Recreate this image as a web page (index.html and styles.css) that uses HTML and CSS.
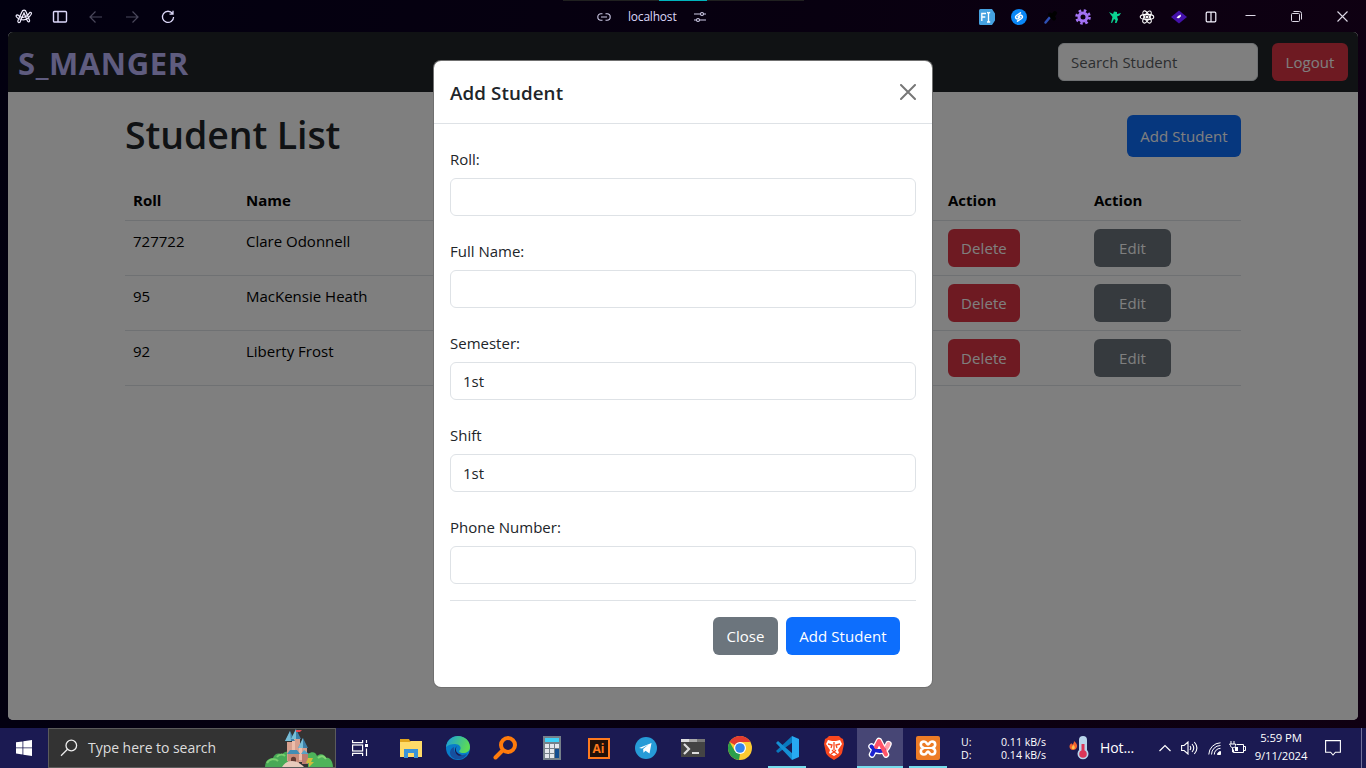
FILE: index.html
```html
<!DOCTYPE html>
<html lang="en">
<head>
<meta charset="utf-8">
<title>Student List</title>
<link rel="stylesheet" href="styles.css">
</head>
<body>
<div class="desktop">
  <header class="titlebar">
    <div class="nav-icons">
      <svg width="18" height="16" viewBox="0 0 18 16" fill="none" stroke="#f1edff" stroke-width="1.2"><path d="M6 10.5 9 4l3.2 7.5c1 2.300 2.800 1.400 2.300-.2L11.200 3C10.500.4 7.700.4 6.800 3L3 11.500c-.8 2 1.500 3 2.200 1.200l.8-2.200c3.500 1 7.500-.7 10.200-5.200 1-1.800-.9-2.800-1.800-1.300C11.500 9 6.500 9.500 3.500 6.500 2.300 5.200.3 6.300 1.500 8c1 1.500 2.700 2.200 4.500 2.500"/></svg>
      <svg width="16" height="14" viewBox="0 0 16 14" fill="none" stroke="#ddd8fa" stroke-width="1.400"><rect x="1.500" y="1.500" width="13" height="10.500" rx="1"/><path d="M6 1.500V12"/></svg>
      <svg width="14" height="14" viewBox="0 0 14 14" fill="none" stroke="#4b485c" stroke-width="1.200"><path d="M13 7H1M6.500 1.500 1 7l5.500 5.500"/></svg>
      <svg width="14" height="14" viewBox="0 0 14 14" fill="none" stroke="#4b485c" stroke-width="1.200"><path d="M1 7h12M7.500 1.500 13 7l-5.500 5.500"/></svg>
      <svg width="14" height="14" viewBox="0 0 14 14" fill="none" stroke="#ddd8fa" stroke-width="1.300"><path d="M11.500 3.500A5.600 5.600 0 1 0 12.600 7M12 .8v3.400H8.500"/></svg>
    </div>
    <div class="address">
      <svg width="14" height="10" viewBox="0 0 14 10" fill="none" stroke="#cfcbe8" stroke-width="1.100"><path d="M5.500 1.800H4a3.200 3.200 0 0 0 0 6.400h1.500M8.500 1.800H10a3.200 3.200 0 0 1 0 6.400H8.500M4 5h6"/></svg>
      <span class="host">localhost</span>
      <svg width="14" height="12" viewBox="0 0 14 12" fill="none" stroke="#cfcbe8" stroke-width="1.100"><path d="M1 3h6.500M10.500 3H13M1 9h2.500M6.500 9H13"/><circle cx="9" cy="3" r="1.500"/><circle cx="5" cy="9" r="1.500"/></svg>
    </div>
    <div class="progress"><span class="progress-mark"></span></div>
    <div class="extensions">
      <svg width="16" height="16" viewBox="0 0 16 16"><path d="M1.500 0H13l3 4.500v7L13 16H1.500A1.500 1.500 0 0 1 0 14.500v-13A1.500 1.500 0 0 1 1.500 0Z" fill="#45a1e0"/><path d="M2.800 12V4.500H7M2.800 8h3.500M8 3.500c1 0 1.500.3 1.500 1 0-.7.700-1 1.700-1M9.500 4.500v7.500M8 13c1 0 1.500-.3 1.500-1 0 .7.700 1 1.700 1" fill="none" stroke="#fff" stroke-width="1.300"/></svg>
      <svg width="16" height="16" viewBox="0 0 16 16"><circle cx="8" cy="8" r="8" fill="#0a87f7"/><path d="M9.500 3.800 5.500 6.500C3.500 8 5.300 10.800 7.200 9.600L9 8.200M6.500 12.200l4-2.700C12.500 8 10.700 5.200 8.800 6.400L7 7.800" fill="none" stroke="#fff" stroke-width="1.500" stroke-linecap="round"/></svg>
      <svg width="16" height="16" viewBox="0 0 16 16"><path d="m2.500 13.500 5-6" stroke="#2e50b5" stroke-width="2.500" stroke-linecap="round"/><path d="m7 5.500 4 4M9 8l3-4" stroke="#000" stroke-width="4" stroke-linecap="round"/></svg>
      <svg width="16" height="16" viewBox="0 0 16 16" fill="none" stroke="#a372f4"><circle cx="8" cy="8" r="6.500" stroke-width="2.600" stroke-dasharray="2.550 2.550"/><circle cx="8" cy="8" r="4" stroke-width="3"/></svg>
      <svg width="16" height="16" viewBox="0 0 16 16"><path d="m2 3 4 2 1-2.500 3 .5v2l4-1-1.500 2.500L10 7.500l1 3L9.500 14 8 14l.5-3L7 10l-2 4-1-.2L5.500 8 4 6Z" fill="#0bd392"/></svg>
      <svg width="16" height="16" viewBox="0 0 16 16" fill="none" stroke="#fff" stroke-width="1.100"><ellipse cx="8" cy="8" rx="6.800" ry="2.600"/><ellipse cx="8" cy="8" rx="6.800" ry="2.600" transform="rotate(60 8 8)"/><ellipse cx="8" cy="8" rx="6.800" ry="2.600" transform="rotate(120 8 8)"/><circle cx="8" cy="8" r="1" fill="#fff"/></svg>
      <svg width="16" height="16" viewBox="0 0 16 16"><path d="m8 1.500 8 6.500-8 6.500L0 8Z" fill="#4411aa"/><path d="m5.500 9 1.500-2 3-1.500-.3 2L8 9.200Z" fill="#fff"/></svg>
      <svg width="16" height="16" viewBox="0 0 16 16" fill="none" stroke="#f5f3ff" stroke-width="1.200"><rect x="3.200" y="3.200" width="9.600" height="9.600" rx="1"/><path d="M8 3v10"/></svg>
    </div>
    <div class="window-controls">
      <svg width="11" height="11" viewBox="0 0 11 11" stroke="#ddd8e6"><path d="M0.500 4.500h10"/></svg>
      <svg width="11" height="11" viewBox="0 0 11 11" fill="none" stroke="#ddd8e6"><rect x=".5" y="2.500" width="8" height="8" rx="1"/><path d="M2.500.5h6a2 2 0 0 1 2 2v6"/></svg>
      <svg width="11" height="11" viewBox="0 0 11 11" stroke="#ddd8e6" stroke-width="1.100"><path d="m.5.5 10 10m0-10-10 10"/></svg>
    </div>
  </header>

  <main class="page">
    <nav class="navbar">
      <span class="brand">S_MANGER</span>
      <div class="search-box">Search Student</div>
      <button class="btn danger">Logout</button>
    </nav>
    <section class="content">
      <div class="list-head">
        <h1 class="list-title">Student List</h1>
        <button class="btn primary tall">Add Student</button>
      </div>
      <table class="students">
        <colgroup><col class="col-roll"><col class="col-name"><col class="col-action"><col class="col-edit"></colgroup>
        <thead><tr><th>Roll</th><th>Name</th><th>Action</th><th>Action</th></tr></thead>
        <tbody>
          <tr><td>727722</td><td>Clare Odonnell</td><td><button class="btn danger">Delete</button></td><td><button class="btn secondary edit">Edit</button></td></tr>
          <tr><td>95</td><td>MacKensie Heath</td><td><button class="btn danger">Delete</button></td><td><button class="btn secondary edit">Edit</button></td></tr>
          <tr><td>92</td><td>Liberty Frost</td><td><button class="btn danger">Delete</button></td><td><button class="btn secondary edit">Edit</button></td></tr>
        </tbody>
      </table>
    </section>
    <div class="backdrop">
      <div class="modal">
        <div class="modal-head">
          <h5 class="modal-title">Add Student</h5>
          <svg width="16" height="16" viewBox="0 0 16 16" stroke="#777" stroke-width="2" stroke-linecap="round"><path d="m1 1 14 14M15 1 1 15"/></svg>
        </div>
        <div class="modal-body">
          <div class="field"><label class="field-label">Roll:</label><div class="control"></div></div>
          <div class="field"><label class="field-label">Full Name:</label><div class="control"></div></div>
          <div class="field"><label class="field-label">Semester:</label><div class="control">1st</div></div>
          <div class="field"><label class="field-label">Shift</label><div class="control">1st</div></div>
          <div class="field last"><label class="field-label">Phone Number:</label><div class="control"></div></div>
          <div class="modal-foot">
            <button class="btn secondary close">Close</button>
            <button class="btn primary">Add Student</button>
          </div>
        </div>
      </div>
    </div>
  </main>

  <footer class="taskbar">
    <div class="start"><svg width="16" height="16" viewBox="0 0 16 16" fill="#fff"><path d="M0 2.300 6.500 1.400v6.100H0ZM7.300 1.300 16 0v7.500H7.300ZM0 8.300h6.500v6.200L0 13.600ZM7.300 8.300H16V16l-8.700-1.300Z"/></svg></div>
    <div class="task-search">
      <svg width="18" height="18" viewBox="0 0 18 18" fill="none" stroke="#eee" stroke-width="1.300"><circle cx="11.300" cy="6.500" r="5.300"/><path d="M7.500 10.300 1 16.800"/></svg>
      <span class="task-search-text">Type here to search</span>
      <svg class="castle" width="70" height="38" viewBox="0 0 70 38">
        <path d="M0 38c0-5 3-9 8-9 1-4 6-6 9-3 3-5 9-4 11 0l2 12Z" fill="#48a957"/><path d="M2 34c2-4 8-5 11-2M12 28c2-3 6-3 8-1" fill="none" stroke="#7bcf70" stroke-width="2"/>
        <path d="M43 38V25c4-3 8-2 9 2 3-3 8-2 9 2 4-1 7 4 7 9Z" fill="#4db45a"/><path d="M53 29c3-3 6-2 8 1" fill="none" stroke="#83d575" stroke-width="2"/>
        <path d="M22 13h6v19h-6ZM27 8h8v24h-8ZM34 17h8v16h-8Z" fill="#d7a08f"/><path d="M27 8h3v24h-3ZM34 17h3v14h-3Z" fill="#edbdaa"/>
        <path d="m25 2 5 10H20ZM31 0l5 10H26ZM38 9l5 10H33Z" fill="#3d7fa8"/><path d="m25 2 1 10h-6ZM31 0v10h-5ZM38 9v10h-5Z" fill="#78bdd6"/>
        <path d="M31 1h6l-2 2h-4Z" fill="#e44850"/><path d="M23 24h11v12H23Z" fill="#c88b78"/><path d="m22 25 3-4h7l3 4Z" fill="#438db4"/><path d="M26 36v-6c0-3 5-3 5 0v6Z" fill="#643a32"/>
        <path d="M37 25h6v10h-6Z" fill="#bb7c70"/><path d="m36 25 3-4 5 4Z" fill="#57a2c4"/><path d="M17 38c3-4 5-6 10-6s9 3 12 6Z" fill="#e8cbbc"/><path d="M43 29h5l-2 4h3l-5 5v-4h-3Z" fill="#d1bd3d"/>
      </svg>
    </div>
    <div class="tasks">
      <div class="task view"><svg width="16" height="16" viewBox="0 0 16 16" fill="none" stroke="#fff" stroke-width="1.200"><path d="M.6 0v2.600h10V0M.6 16v-2.600h10V16M14.500 0v3M14.500 8.500V16"/><rect x=".6" y="5" width="10" height="6"/><path d="M13 4h3v3h-3Z" fill="#fff" stroke="none"/></svg></div>
      <div class="task"><svg width="24" height="24" viewBox="0 0 24 24"><path d="M1 3h9l1 2h12v16H1Z" fill="#e1a51d"/><path d="M1 6h10l1-1h11v16H1Z" fill="#ffdb68"/><path d="M5 22v-9h14v9h-4v-5H9v5Z" fill="#3993d8"/></svg></div>
      <div class="task"><svg width="24" height="24" viewBox="0 0 24 24"><defs><linearGradient id="edge-top" x2="1" y2=".3"><stop stop-color="#199be2"/><stop offset="1" stop-color="#5bdb57"/></linearGradient></defs><circle cx="12" cy="12" r="12" fill="#087cc9"/><path d="M0 11C1 4 6 0 12 0c7 0 12 5 12 11 0 4-3 6-7 6-3 0-5-1-3-3 2-3-1-6-5-6-4 0-7 1-9 3Z" fill="url(#edge-top)"/><path d="M8 11c-1 7 5 10 13 7-3 5-8 6-12 5C2 20 3 13 8 11Z" fill="#164f9e"/><path d="M11 10c-3 4 0 8 5 9-5 3-10-5-5-9Z" fill="#1b1a52"/></svg></div>
      <div class="task"><svg width="24" height="24" viewBox="0 0 24 24" fill="none" stroke="#ff7b0b"><circle cx="15" cy="9" r="7" stroke-width="4"/><path d="m9.500 14.500-7 7" stroke-width="4" stroke-linecap="round"/></svg></div>
      <div class="task"><svg width="18" height="24" viewBox="0 0 18 24"><path d="M0 0h18v24H0Z" fill="#75808a"/><path d="M2 2h14v4H2Z" fill="#3ed0f7"/><path d="M2 8h4v4H2Zm5 0h4v4H7Zm5 0h4v4h-4ZM2 13h4v4H2Zm5 0h4v4H7ZM2 18h4v4H2Zm5 0h4v4H7Z" fill="#e4e7ed"/><path d="M12 13h4v9h-4Z" fill="#124d90"/></svg></div>
      <div class="task"><div class="ai-icon">Ai</div></div>
      <div class="task"><svg width="22" height="22" viewBox="0 0 22 22"><circle cx="11" cy="11" r="11" fill="#269bd7"/><path d="m4 11 12.500-5-2 10.500-4-2.800-2 2-.4-3.700 5.400-4.500-6.500 4Z" fill="#fff"/></svg></div>
      <div class="task"><svg width="24" height="18" viewBox="0 0 24 18"><path d="M0 0h24v18H0Z" fill="#444"/><path d="M0 0h8v3H0Z" fill="#ddd"/><path d="M8 0h8v3H8Z" fill="#aaa"/><path d="M16 0h8v3h-8Z" fill="#777"/><path d="m3 5 5 5-5 5M11 14h7" fill="none" stroke="#ddd" stroke-width="2.200"/></svg></div>
      <div class="task"><svg width="24" height="24" viewBox="0 0 24 24"><circle cx="12" cy="12" r="12" fill="#fccb32"/><path d="M1.600 6A12 12 0 0 1 22.400 6H12v6Z" fill="#e33b2f"/><path d="M1.600 6 6.800 15 12 18l-1 6A12 12 0 0 1 1.600 6Z" fill="#2b9f4a"/><circle cx="12" cy="12" r="6" fill="#fff"/><circle cx="12" cy="12" r="4.800" fill="#3484ed"/></svg></div>
      <div class="task running"><svg width="24" height="24" viewBox="0 0 24 24"><path d="M17 0 1 15l2 2L18 6Z" fill="#0879be"/><path d="M1 7 3 5l15 13-1 6Z" fill="#1590d4"/><path d="m17 0 7 3v18l-7 3Z" fill="#27a9f2"/></svg></div>
      <div class="task"><svg width="20" height="24" viewBox="0 0 20 24"><path d="M5 0h10l2 2 2 1 1 5-2 9c-1 3-5 5-8 7-3-2-7-4-8-7L0 8l1-5 2-1Z" fill="#f9471e"/><path d="m4 4 4 1h4l4-1 2 4-4 6 1 3-5 3-5-3 1-3-4-6Z" fill="#fff"/><path d="m4 8 4 1-1 3M16 8l-4 1 1 3M10 6v8m-2 0 2 2 2-2M7 18l3-2 3 2" fill="none" stroke="#f9471e" stroke-width="1.300"/></svg></div>
      <div class="task active"><svg width="24" height="22" viewBox="0 0 24 22" fill="none" stroke-linecap="round" stroke-linejoin="round"><path d="M4 17.500 11 4l7 13.500M3.500 9.500c4 6 14 7 17-2.500" stroke="#fff" stroke-width="6.500"/><path d="M20.500 7c-1 3-2.500 5-5 6.500" stroke="#ff9da9" stroke-width="4"/><path d="M3.500 9.500c3 4.500 8 5.500 12.500 3.500M4 17.500l2.500-5" stroke="#1a20cf" stroke-width="4"/><path d="m8 10 3-6 7 13.500" stroke="#ff5368" stroke-width="4"/></svg></div>
      <div class="task running"><svg width="24" height="24" viewBox="0 0 24 24"><rect width="24" height="24" rx="2" fill="#ed7c26"/><path d="M8 12C3.500 11 4 5.500 8 5.500c3 0 2.500 3 4 3s1-3 4-3c4 0 4.500 5.500 0 6.500 4.500 1 4 6.500 0 6.500-3 0-2.500-3-4-3s-1 3-4 3c-4 0-4.500-5.500 0-6.500Z" fill="none" stroke="#fff" stroke-width="2.600"/><path d="M8 12h8" stroke="#fff" stroke-width="2"/></svg></div>
    </div>
    <div class="net"><span>U:</span><span class="rate">0.11 kB/s</span><span>D:</span><span class="rate">0.14 kB/s</span></div>
    <div class="weather">
      <svg width="20" height="24" viewBox="0 0 20 24"><path d="M5 5c2.500 2 3.500 4 3 6s-2 3-4 3-3.500-1.500-3.500-3.500S2 7.500 2.500 7c0 1 .5 1.500 1 1.500C4.500 7.500 5 6.500 5 5Z" fill="#f2632f"/><path d="M4.500 9c1.500 1.500 2 4-.3 4.200C2 13 2.500 10.500 4.500 9Z" fill="#ffc34d"/><path d="M10 4a4 4 0 0 1 8 0v10a5.500 5.500 0 1 1-8 0Z" fill="#b9d5ec"/><circle cx="14" cy="18" r="3.800" fill="#db3658"/><path d="M14 8v9" stroke="#db3658" stroke-width="3"/></svg>
      <span class="weather-text">Hot...</span>
    </div>
    <div class="tray">
      <svg width="12" height="8" viewBox="0 0 12 8" fill="none" stroke="#fff" stroke-width="1.200"><path d="m.5 7 5.500-5.500L11.500 7"/></svg>
      <svg width="17" height="14" viewBox="0 0 17 14" fill="none" stroke="#fff" stroke-width="1.100"><path d="M.6 4.500h2.500L7 1v12L3.100 9.500H.6ZM9 5c1 1.300 1 2.700 0 4M11 3c2.300 2.600 2.300 5.400 0 8M13.300 1c3.500 4 3.500 8 0 12"/></svg>
      <svg width="13" height="13" viewBox="0 0 13 13" fill="none" stroke="#fff"><path d="M.8 12.500A12 12 0 0 1 12.500.8M3.500 12.500a9 9 0 0 1 9-9M6.300 12.500a6.200 6.200 0 0 1 6.200-6.200"/><path d="M9.500 12.500c0-1.500 1.500-3 3-3v3Z" fill="#fff"/></svg>
      <svg class="battery" width="17" height="14" viewBox="0 0 17 14" fill="none" stroke="#fff"><path d="M7.500 3.500h7v8h-10v-3M14.500 5.500h2v4h-2M2 0v3M5 0v3M.5 3h6v1.500c0 3-5 3-5 0ZM3.500 7v4h2"/><path d="M6 6h3v4H6Z" fill="#fff" stroke="none"/></svg>
    </div>
    <div class="clock"><span>5:59 PM</span><span>9/11/2024</span></div>
    <div class="notice"><svg width="16" height="16" viewBox="0 0 16 16" fill="none" stroke="#fff" stroke-width="1.100"><path d="M.6.600h14.800v11.600h-5L8 15l-2.400-2.800h-5Z"/></svg></div>
  </footer>
</div>
</body>
</html>
```
FILE: styles.css
```css
* { box-sizing: border-box; }
body { margin: 0; font: 15px/24px "Open Sans", "Noto Sans", sans-serif; color: #212529; }
svg { display: block; flex: none; }
.desktop { width: 1366px; height: 768px; overflow: hidden; display: flex; flex-direction: column; background: linear-gradient(100deg, #020010, #080010 55%, #100012); }

.titlebar { height: 32px; flex: none; display: grid; grid-template-columns: 597px 376px 261px 1fr; align-items: center; position: relative; }
.nav-icons { padding: 2px 0 0 15px; display: flex; align-items: center; gap: 22px; }
.nav-icons svg:nth-child(2) { margin-left: -3px; margin-right: -1px; }
.address { display: flex; align-items: center; padding-top: 2px; }
.host { color: #dcd7f8; font-size: 12px; line-height: 16px; letter-spacing: -.2px; margin: 0 17px 0 17px; }
.progress { position: absolute; left: 563px; top: 0; width: 241px; height: 1px; background: #202020; }
.progress-mark { display: block; width: 48px; height: 1px; margin-left: 96px; background: #00b4bc; }
.extensions { display: flex; gap: 16px; padding: 2px 0 0 6px; }
.window-controls { display: flex; gap: 35px; padding-left: 11px; }

.page { height: 688px; flex: none; margin: 0 8px 8px; border-radius: 5px; overflow: hidden; background: #fff; position: relative; }
.navbar { height: 60px; background: #212529; display: flex; align-items: center; padding: 0 10px; }
.brand { font-size: 31px; line-height: 40px; font-weight: 700; letter-spacing: .6px; color: #beb8ff; margin-right: auto; padding-top: 1px; }
.search-box { width: 200px; height: 38px; border: 1px solid #dee2e6; border-radius: 6px; background: #fff; color: #595c5f; padding: 6px 12px; margin-right: 14px; }
.btn { height: 38px; border: 0; border-radius: 6px; padding: 0 13px; font: inherit; letter-spacing: .08px; color: #fff; white-space: nowrap; }
.danger { background: #dc3545; }
.primary { background: #0d6efd; }
.secondary { background: #6c757d; }
.navbar .btn { width: 76px; }
.students .danger { width: 72px; }
.primary { width: 114px; }
.close { width: 65px; }
.tall { height: 42px; }
.edit { width: 77px; }
.content { width: 1116px; margin-left: 117px; }
.list-head { display: flex; justify-content: space-between; align-items: center; padding-top: 18px; height: 70px; }
.list-title { margin: -3px 0 0; font-size: 37.500px; line-height: 48px; font-weight: 550; letter-spacing: -.1px; }
.list-head .btn { margin-top: -1px; }
.students { width: 1116px; table-layout: fixed; border-collapse: separate; border-spacing: 0; margin-top: 18px; color: #000; }
.col-roll { width: 113px; }
.col-name { width: 702px; }
.col-action { width: 146px; }
.col-edit { width: 155px; }
.students th, .students td { text-align: left; vertical-align: top; padding: 8px; border-bottom: 1px solid #dee2e6; }
.students th { height: 41px; font-weight: 700; }
.students td { height: 55px; }
.students .btn { display: block; }

.backdrop { position: absolute; inset: 0; background: rgba(0, 0, 0, .5); padding: 29px 0 0 426px; }
.modal { width: 498px; height: 626px; background: #fff; border-radius: 7px; box-shadow: 0 0 0 1px #707070; }
.modal-head { height: 63px; border-bottom: 1px solid #dee2e6; display: flex; justify-content: space-between; align-items: center; padding: 0 16px; }
.modal-title { margin: 0; padding-top: 2px; font-size: 18.750px; line-height: 30px; font-weight: 550; letter-spacing: .1px; }
.modal-body { padding: 23px 16px 0; }
.field { margin-bottom: 23px; }
.field-label { display: block; line-height: 24px; }
.control { height: 38px; margin-top: 7px; border: 1px solid #dee2e6; border-radius: 6px; padding: 6px 12px; }
.last { margin-bottom: 16px; }
.modal-foot { border-top: 1px solid #dee2e6; padding: 16px 16px 0; display: flex; justify-content: flex-end; gap: 8px; }

.taskbar { height: 40px; flex: none; background: #1b1a52; color: #fff; display: flex; position: relative; }
.start { width: 48px; display: grid; place-items: center; }
.task-search { width: 288px; border: 1px solid #5b5b5b; background: #333; display: flex; align-items: center; padding-left: 11px; }
.task-search-text { font-size: 14px; letter-spacing: -.04px; color: #ddd; margin: 0 auto 0 10px; }
.castle { align-self: flex-end; }
.tasks { display: flex; width: 615px; }
.task { width: 47px; flex: none; display: grid; place-items: center; border-bottom: 2px solid transparent; background-clip: padding-box; }
.task svg, .ai-icon { position: relative; top: 1px; }
.view { width: 51px; padding-right: 3px; }
.running { width: 38px; margin: 0 4px 0 5px; border-bottom-color: #76dcec; }
.active { width: 46px; margin-right: 1px; background-color: #474675; border-bottom-color: #76dcec; }
.ai-icon { width: 22px; height: 21px; border: 2px solid #ff7a1d; background: #211009; color: #ff7a1d; font: 700 12px/17px "Open Sans", sans-serif; text-align: center; }
.net { width: 108px; display: grid; grid-template-columns: 40px 56px; grid-template-rows: 13px 13px; padding: 8px 0 0 10px; margin-right: 1px; font-size: 10.600px; line-height: 13px; }
.rate { justify-self: start; white-space: nowrap; }
.weather { width: 86px; display: flex; align-items: center; gap: 11px; padding-left: 9px; font-size: 14px; letter-spacing: -.1px; }
.tray { width: 100px; display: flex; align-items: center; gap: 10px; padding-left: 13px; }
.battery { margin-left: -2px; }
.clock { width: 70px; text-align: center; font-size: 11.300px; line-height: 18px; letter-spacing: -.1px; display: flex; flex-direction: column; padding-top: 1px; }
.notice { width: 46px; padding-right: 12px; border-right: 1px solid #72719a; display: grid; place-items: center; }
```
